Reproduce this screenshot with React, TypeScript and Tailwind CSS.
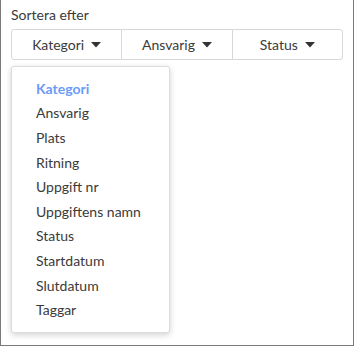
import React from 'react';

const fields = [
  'Kategori',
  'Ansvarig',
  'Plats',
  'Ritning',
  'Uppgift nr',
  'Uppgiftens namn',
  'Status',
  'Startdatum',
  'Slutdatum',
  'Taggar',
];

const Caret = () => (
  <svg width="10" height="6" viewBox="0 0 10 6" className="ml-[7px]">
    <path d="M0 0h10L5 5.5z" fill="#333" />
  </svg>
);

const App: React.FC = () => {
  return (
    <div
      className="w-[354px] h-[347px] bg-white"
      style={{ fontFamily: 'Lato, "Noto Sans", sans-serif' }}
    >
      <div className="h-[346px] border-l border-r border-b border-[#7a7a7a] px-[10px] pt-[5px] text-[#3a3a3a]">
        <div className="text-[14px] leading-[20px] h-[24px]">Sortera efter</div>

        {/* segmented sort buttons */}
        <div className="flex h-[31px] border border-[#d8d8d8] rounded-[3px]">
          {['Kategori', 'Ansvarig', 'Status'].map((label, i) => (
            <button
              key={label}
              className={`flex-1 flex items-center justify-center text-[14px] text-[#3a3a3a] ${
                i > 0 ? 'border-l border-[#d8d8d8]' : ''
              }`}
            >
              {label}
              <Caret />
            </button>
          ))}
        </div>

        {/* dropdown menu */}
        <div className="relative">
          <div className="absolute left-0 top-[6px] w-[159px] bg-white border border-[#dcdcdc] rounded-[3px] shadow-[0_2px_6px_rgba(0,0,0,0.18)] pt-[9px] pb-[10px]">
            {fields.map((f, i) => (
              <div
                key={f}
                className={`h-[24.6px] flex items-center pl-[24px] text-[14px] ${
                  i === 0 ? 'text-[#6b9af7] font-bold' : 'text-[#3a3a3a]'
                }`}
              >
                {f}
              </div>
            ))}
          </div>
        </div>
      </div>
    </div>
  );
};

export default App;
